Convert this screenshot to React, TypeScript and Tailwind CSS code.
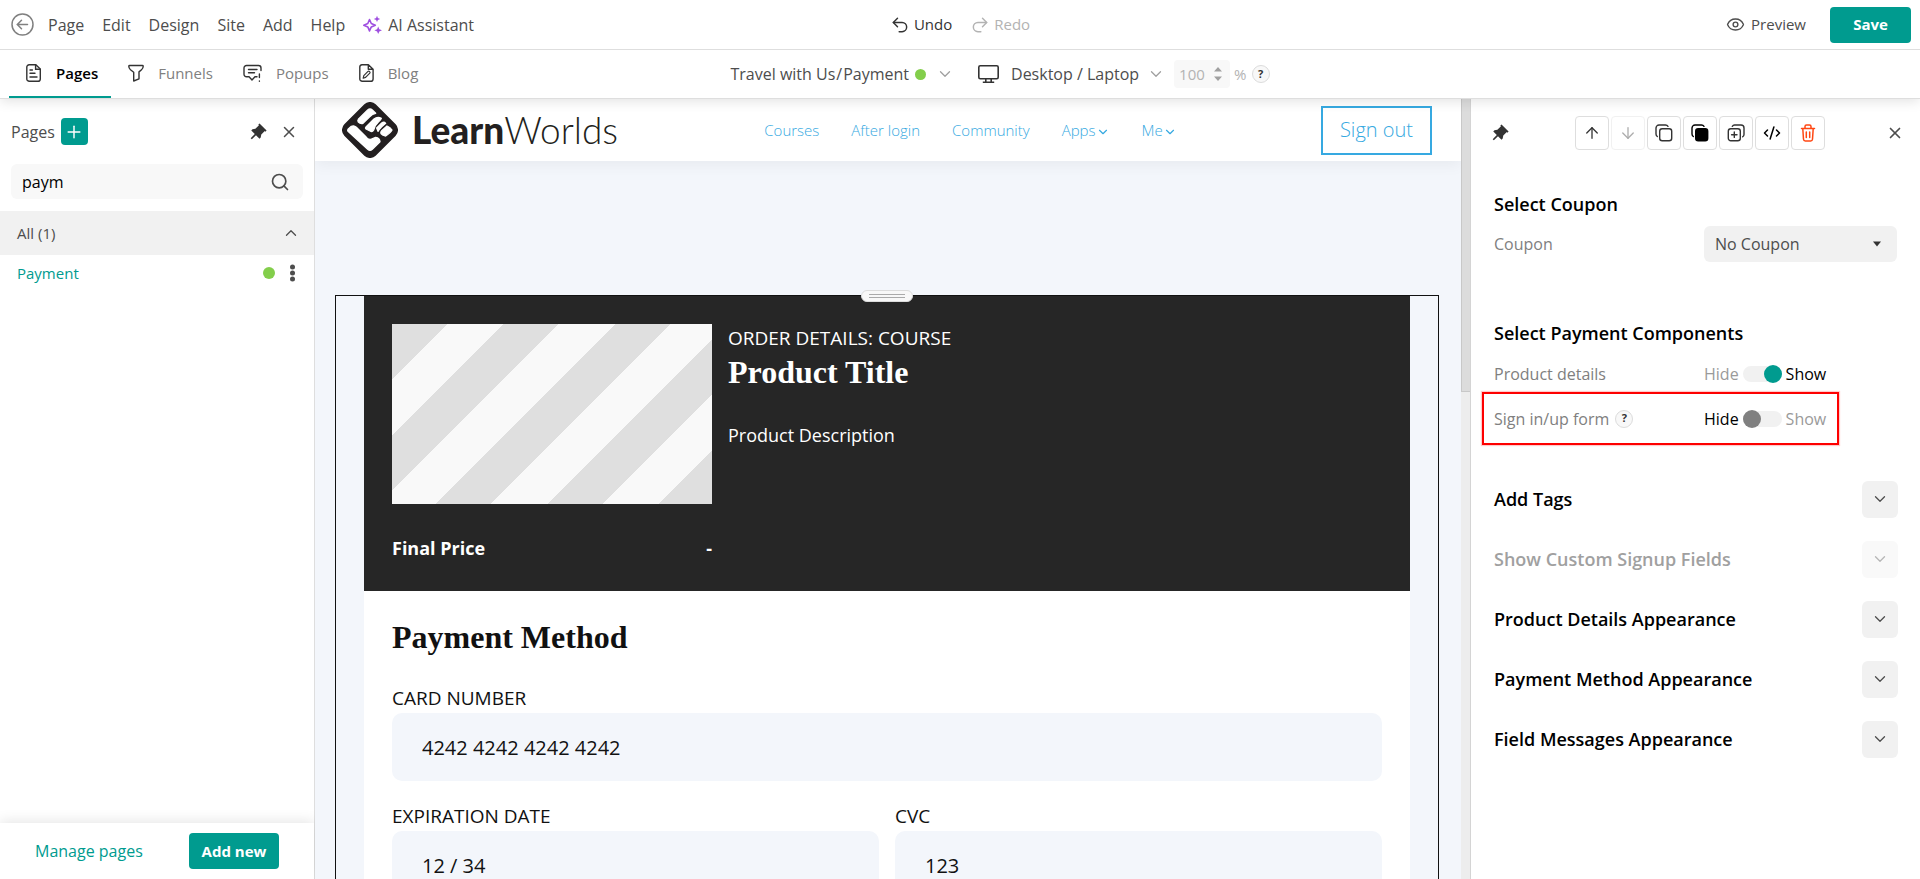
import { useState, type ReactNode } from "react";
import {
  ArrowDown,
  ArrowUp,
  ChevronDown,
  ChevronUp,
  CodeXml,
  Eye,
  Plus,
  Redo2,
  Search,
  Undo2,
  X,
} from "lucide-react";
import { RiPushpinFill } from "react-icons/ri";

const menuItems = ["Page", "Edit", "Design", "Site", "Add", "Help"];

const PagesIcon = () => (
  <svg width="16" height="20" viewBox="0 0 16 20" fill="none" stroke="#333" strokeWidth="1.4">
    <path d="M3.2 1.7h6.6l4.5 4.4v9.8a2.4 2.4 0 0 1-2.4 2.4H3.2A2.4 2.4 0 0 1 .8 15.9V4.1a2.4 2.4 0 0 1 2.4-2.4Z" />
    <path d="M9.6 1.9v4.3h4.5M4 7h2.4M4 10.2h5M4 14h7" strokeLinecap="round" />
  </svg>
);

const FunnelIcon = () => (
  <svg width="16" height="20" viewBox="0 0 16 20" fill="none" stroke="#333" strokeWidth="1.4" strokeLinejoin="round">
    <path d="M.8 3.2c0-.5.3-.7.8-.7h12.8c.5 0 .8.2.8.7 0 1.7-.6 2.6-1.7 3.5L11 8.9v6.900L5.700 18V9.200L2.500 6.700C1.400 5.800.8 4.900.8 3.200Z" />
  </svg>
);

const PopupsIcon = () => (
  <svg width="19" height="20" viewBox="0 0 19 20" fill="none" stroke="#333" strokeWidth="1.4" strokeLinecap="round">
    <path d="M14 13.8h-2l-3 3.2-3-3.200H3.500a2.500 2.500 0 0 1-2.500-2.500V5a2.500 2.500 0 0 1 2.500-2.500h12A2.500 2.500 0 0 1 18 5v2.500M5.500 6.500h8.500M5.500 9.800h6M16.400 11v3.500M16.400 18v.3" />
  </svg>
);

const BlogIcon = () => (
  <svg width="15" height="20" viewBox="0 0 15 20" fill="none" stroke="#333" strokeWidth="1.4" strokeLinejoin="round">
    <path d="M3 1.7h6.4l4.7 4.600v9.600a2.400 2.400 0 0 1-2.400 2.400H3.200A2.400 2.400 0 0 1 .8 15.900V4.100A2.400 2.400 0 0 1 3 1.700ZM9.300 1.900v4.300h4.500" />
    <path d="m4.200 15.200.6-2.600 4.200-4.200c1-.9 2.700.8 1.800 1.800l-4.200 4.200Z" strokeWidth="1.2" />
  </svg>
);

const SparkleIcon = () => (
  <svg width="19" height="20" viewBox="0 0 19 20">
    <path d="M6.5 4.5 8.3 8.5l4 1.7-4 1.7-1.8 4-1.700-4-4-1.700 4-1.700Z" fill="none" stroke="#9f4fe0" strokeWidth="1.6" strokeLinejoin="round" />
    <path d="m14 .8.9 2.200 2.300.9-2.300 1L14 7l-.9-2.100-2.300-1 2.300-.9Z" fill="#9f4fe0" />
    <path d="m15.200 11.500 1.100 2.700 2.700 1.100-2.700 1.100-1.100 2.700-1.100-2.700-2.700-1.100 2.700-1.100Z" fill="#9f4fe0" />
  </svg>
);

const MonitorIcon = () => (
  <svg width="21" height="20" viewBox="0 0 21 20" fill="none" stroke="#333" strokeWidth="1.6">
    <rect x=".8" y="1.8" width="19.4" height="13" rx="1.5" />
    <path d="M7.8 15v3M13.2 15v3M4.8 18.2h11.400" />
  </svg>
);

const CopyIcon = ({ filled = false }: { filled?: boolean }) => (
  <svg width="18" height="18" viewBox="0 0 18 18" fill="none" stroke={filled ? "#000" : "#333"} strokeWidth="1.4" strokeLinecap="round">
    <rect x="4.7" y="4.7" width="12" height="12" rx="2.5" fill={filled ? "#000" : "none"} />
    <path d="M2.3 12.500A3 3 0 0 1 1 10V4a3 3 0 0 1 3-3h6.500c1.200 0 2 .5 2.500 1.300" />
  </svg>
);

const CopyPlusIcon = () => (
  <svg width="18" height="18" viewBox="0 0 18 18" fill="none" stroke="#333" strokeWidth="1.4" strokeLinecap="round">
    <rect x="1.3" y="4.7" width="12" height="12" rx="2.5" />
    <path d="M7.300 8v5.400M4.600 10.700H10M5.300 2.300A3 3 0 0 1 7.500 1H14a3 3 0 0 1 3 3v6.500c0 1-.5 1.700-1.300 2.300" />
  </svg>
);

const TrashIcon = () => (
  <svg width="16" height="18" viewBox="0 0 16 18" fill="none" stroke="#ff4713" strokeWidth="1.5" strokeLinecap="round" strokeLinejoin="round">
    <path d="M1.500 4.500h13M2.800 4.700l.7 10.500c.1 1.100.7 1.700 1.800 1.700h5.400c1.100 0 1.700-.6 1.800-1.700l.7-10.500M5 4.300V2.500C5 1.500 5.500 1 6.500 1h3c1 0 1.500.5 1.500 1.500v1.800M6.300 8v5.500M9.700 8v5.500" />
  </svg>
);

const LogoMark = () => (
  <svg width="56" height="56" viewBox="21 18 168 168">
    <rect x="38.5" y="35.5" width="133" height="133" rx="24" fill="#231f20" transform="rotate(45 105 102)" />
    <g fill="#fff" stroke="#fff" strokeWidth="4" strokeLinejoin="round">
      <path d="M70 70 98 42Q105 36 112 42L122 52Q112 54 104 62L84 82Q76 84 70 78Q67 74 70 70Z" />
      <path d="M93 93 117 69Q128 60 139 67Q138 71 130 78Q119 88 116 102Q112 109 105 105L93 99Q90 96 93 93Z" />
      <path d="M125 96 140 81Q147 76 152 82L140 92Q132 100 129 106Z" />
      <path d="M140 104 156 90Q166 94 171 102Q167 110 152 120Q141 118 138 113Q136 108 140 104Z" />
      <path d="M39 100 49 91Q57 87 64 94L94 124Q103 134 113 128L122 124Q134 126 135 137L112 160Q105 166 98 160L39 106Q37 103 39 100Z" />
    </g>
  </svg>
);

const HelpBadge = () => (
  <button
    aria-label="Help"
    className="flex h-[18px] w-[18px] items-center justify-center rounded-full border border-[#dcdcdc] bg-[#f8f8f8] text-[11px] font-bold text-[#333]"
  >
    ?
  </button>
);

const tabs = [
  { name: "Pages", icon: <PagesIcon /> },
  { name: "Funnels", icon: <FunnelIcon /> },
  { name: "Popups", icon: <PopupsIcon /> },
  { name: "Blog", icon: <BlogIcon /> },
];

const TopBar = () => (
  <div className="grid h-[50px] grid-cols-[1fr_auto_1fr] items-center border-b border-[#dedede]">
    <nav className="flex items-center gap-[18px] pl-[11px] text-base text-[#4d4d4d]">
      <button aria-label="Back" className="-mr-1 text-[#808080]">
        <svg width="23" height="23" viewBox="0 0 23 23" fill="none" stroke="currentColor" strokeWidth="1.5" strokeLinecap="round">
          <circle cx="11.5" cy="11.5" r="10.5" />
          <path d="M16.500 11.500h-10M10.500 7.300l-4.200 4.200 4.200 4.200" />
        </svg>
      </button>
      {menuItems.map((item) => (
        <button key={item}>{item}</button>
      ))}
      <button className="flex items-center gap-[6px]">
        <SparkleIcon />
        AI Assistant
      </button>
    </nav>
    <div className="flex items-center gap-[18px] text-[15px]">
      <button className="flex items-center gap-1 font-medium text-[#333]">
        <Undo2 size={20} strokeWidth={1.75} />
        Undo
      </button>
      <button disabled className="flex items-center gap-1 font-medium text-[#b3b3b3]">
        <Redo2 size={20} strokeWidth={1.75} />
        Redo
      </button>
    </div>
    <div className="flex items-center justify-end gap-6 pr-[9px] text-[15px]">
      <button className="flex items-center gap-[6px] font-medium text-[#4d4d4d]">
        <Eye size={19} strokeWidth={1.75} />
        Preview
      </button>
      <button className="h-9 w-[81px] rounded bg-[#009b8f] font-bold text-white">Save</button>
    </div>
  </div>
);

const ToolBar = () => (
  <div className="grid h-[49px] grid-cols-[1fr_auto_1fr] items-center border-b border-[#dedede]">
    <div className="flex h-full pl-[9px] text-[15px] font-medium text-[#808080]">
      {tabs.map((tab, ind) => (
        <button
          key={tab.name}
          className={
            ind == 0
              ? "flex h-full items-center gap-[14px] border-b-2 border-[#009b8f] pr-[13px] pl-[17px] font-semibold text-black"
              : "flex h-full items-center gap-[14px] border-b-2 border-transparent pr-[13px] pl-[17px]"
          }
        >
          {tab.icon}
          {tab.name}
        </button>
      ))}
    </div>
    <div className="flex items-center pl-20 text-base text-[#4d4d4d]">
      <button className="flex items-center gap-[6px]">
        <span className="flex gap-px">
          <span>Travel with Us</span>
          <span>/</span>
          <span>Payment</span>
        </span>
        <span className="h-[11px] w-[11px] rounded-full bg-[#83ce4b]" />
        <ChevronDown size={18} strokeWidth={1.75} className="ml-1 text-[#a0a0a0]" />
      </button>
      <button className="ml-6 flex items-center">
        <MonitorIcon />
        <span className="mr-2 ml-3">Desktop / Laptop</span>
        <ChevronDown size={18} strokeWidth={1.75} className="text-[#a0a0a0]" />
      </button>
      <label className="ml-[9px] flex items-center gap-1 text-[15px] text-[#b3b3b3]">
        <span className="flex h-[28px] w-[56px] items-center justify-between rounded bg-[#f8f8f8] pr-2 pl-[5px]">
          <input aria-label="Zoom" disabled defaultValue="100" className="w-[30px]" />
          <svg width="8" height="14" viewBox="0 0 8 14" fill="#a0a0a0">
            <path d="M4 0l4 4.500H0ZM4 14l4-4.500H0Z" />
          </svg>
        </span>
        %
      </label>
      <span className="ml-[5px] flex">
        <HelpBadge />
      </span>
    </div>
    <div />
  </div>
);

const PagesPanel = () => (
  <aside className="flex w-[315px] shrink-0 flex-col border-r border-[#dedede] bg-white text-[15px] text-[#4d4d4d]">
    <div className="flex items-center pt-[19px] pr-4 pl-[11px]">
      <h2 className="text-base font-medium">Pages</h2>
      <button aria-label="Add page" className="ml-[6px] flex h-[27px] w-[27px] items-center justify-center rounded bg-[#009b8f] text-white">
        <Plus size={20} strokeWidth={1.75} />
      </button>
      <button aria-label="Pin" className="ml-auto text-[#333]">
        <RiPushpinFill size={20} />
      </button>
      <button aria-label="Close" className="ml-3">
        <X size={18} strokeWidth={2} />
      </button>
    </div>
    <div className="mx-[11px] mt-[19px] flex h-[35px] items-center rounded-md bg-[#f8f8f8] pr-[13px] pl-[11px]">
      <input aria-label="Search pages" defaultValue="paym" className="min-w-0 flex-1 bg-transparent text-base text-black outline-none" />
      <Search size={20} strokeWidth={2} className="text-[#4d4d4d]" />
    </div>
    <button className="mt-3 flex h-11 items-center justify-between bg-[#f1f1f1] pr-[14px] pl-[17px]">
      All (1)
      <ChevronUp size={18} strokeWidth={1.75} />
    </button>
    <div className="flex h-9 items-center pr-[18px] pl-[17px]">
      <a href="#" className="text-[#009b8f]">Payment</a>
      <span className="ml-auto h-3 w-3 rounded-full bg-[#83ce4b]" />
      <button aria-label="More" className="ml-[14px]">
        <svg width="7" height="18" viewBox="0 0 7 18" fill="#4d4d4d">
          <circle cx="3.5" cy="3" r="2.5" />
          <circle cx="3.5" cy="9" r="2.5" />
          <circle cx="3.5" cy="15" r="2.5" />
        </svg>
      </button>
    </div>
    <div className="mt-auto flex h-14 items-center justify-between pr-[35px] pl-[35px] shadow-[0_-2px_12px_rgba(0,0,0,0.1)]">
      <a href="#" className="text-base text-[#009b8f]">Manage pages</a>
      <button className="h-9 w-[90px] rounded bg-[#009b8f] text-[15px] font-bold text-white">Add new</button>
    </div>
  </aside>
);

const SiteHeader = () => (
  <header className="flex h-[62px] items-center bg-white pr-[29px] pl-[27px] text-[#36a9e1] shadow-[0_4px_14px_rgba(0,0,0,0.05)]">
    <LogoMark />
    <div className="ml-[14px] w-[208px] font-[Lato] text-[37px] leading-10 font-light whitespace-nowrap text-[#231f20]">
      <span className="font-black">Learn</span>Worlds
    </div>
    <nav className="mx-auto flex items-center gap-8 text-[15px] font-light">
      <a href="#">Courses</a>
      <a href="#">After login</a>
      <a href="#">Community</a>
      <a href="#" className="flex items-center">
        Apps
        <ChevronDown size={14} strokeWidth={2} className="mt-1" />
      </a>
      <a href="#" className="flex items-center">
        Me
        <ChevronDown size={14} strokeWidth={2} className="mt-1" />
      </a>
    </nav>
    <button className="h-[49px] w-[111px] border-2 border-[#36a9e1] text-xl font-light">Sign out</button>
  </header>
);

const Field = ({ id, label, value }: { id: string; label: string; value: string }) => (
  <div>
    <label htmlFor={id} className="block text-[19px] leading-[30px] uppercase">
      {label}
    </label>
    <input id={id} defaultValue={value} className="block h-[68px] w-full rounded-[10px] bg-[#f3f6fb] px-[30px] text-xl outline-none" />
  </div>
);

const Canvas = () => (
  <main className="min-w-0 flex-1 overflow-hidden bg-[#f3f6fb]">
    <SiteHeader />
    <section className="relative mt-[134px] mr-[22px] ml-5 border border-[#111] px-7">
      <div className="absolute -top-[6px] left-1/2 flex h-3 w-[52px] -translate-x-1/2 flex-col items-center justify-center gap-[2px] rounded-md border border-[#dcdcdc] bg-[#f8f8f8]">
        <span className="h-px w-9 bg-[#aaa]" />
        <span className="h-px w-9 bg-[#aaa]" />
      </div>
      <div className="flex h-[295px] gap-4 bg-[#262626] p-7 text-white">
        <div className="w-80 shrink-0">
          <div className="h-[180px] bg-[repeating-linear-gradient(135deg,#dfdfdf_0_39px,#f9f9f9_39px_79px)]" />
          <div className="mt-[30px] flex justify-between text-lg font-bold">
            <span>Final Price</span>
            <span>-</span>
          </div>
        </div>
        <div>
          <div className="text-[19px] leading-7 uppercase">Order details: course</div>
          <h2 className="font-['Liberation_Serif'] text-[32px] leading-10 font-bold">Product Title</h2>
          <p className="mt-[29px] text-lg leading-7">Product Description</p>
        </div>
      </div>
      <div className="bg-white px-7 pt-7 text-[#111]">
        <h2 className="font-['Liberation_Serif'] text-[32px] leading-9 font-bold">Payment Method</h2>
        <div className="mt-7">
          <Field id="card" label="Card number" value="4242 4242 4242 4242" />
        </div>
        <div className="mt-5 grid grid-cols-2 gap-4 pb-7">
          <Field id="exp" label="Expiration date" value="12 / 34" />
          <Field id="cvc" label="CVC" value="123" />
        </div>
      </div>
    </section>
  </main>
);

const ToolButton = ({ label, children, disabled = false }: { label: string; children: ReactNode; disabled?: boolean }) => (
  <button
    aria-label={label}
    disabled={disabled}
    className="flex h-[34px] w-[34px] items-center justify-center rounded border border-[#dedede] text-[#333] disabled:opacity-40"
  >
    {children}
  </button>
);

const ToggleRow = ({ label, initial, help = false }: { label: string; initial: boolean; help?: boolean }) => {
  const [show, setShow] = useState(initial);
  return (
    <div className="grid h-[45px] grid-cols-[210px_auto] items-center justify-start">
      <div className="flex items-center gap-[6px] text-[#808080]">
        {label}
        {help && <HelpBadge />}
      </div>
      <label className="flex items-center gap-1">
        <span className={show ? "text-[#9a9a9a]" : "text-black"}>Hide</span>
        <input
          type="checkbox"
          role="switch"
          aria-label={label}
          checked={show}
          onChange={(e) => setShow(e.target.checked)}
          className="flex h-4 w-[39px] appearance-none items-center rounded-full bg-[#f1f1f1] before:h-[18px] before:w-[18px] before:shrink-0 before:rounded-full before:bg-[#808080] checked:justify-end checked:before:bg-[#009b8f]"
        />
        <span className={show ? "text-black" : "text-[#9a9a9a]"}>Show</span>
      </label>
    </div>
  );
};

const sections = [
  { title: "Add Tags", disabled: false },
  { title: "Show Custom Signup Fields", disabled: true },
  { title: "Product Details Appearance", disabled: false },
  { title: "Payment Method Appearance", disabled: false },
  { title: "Field Messages Appearance", disabled: false },
];

const SettingsPanel = () => (
  <aside className="w-[450px] shrink-0 border-l border-[#d4d4d4] bg-white pt-[17px] pr-[22px] pl-[23px] text-base">
    <div className="flex items-center justify-between">
      <button aria-label="Pin" className="-ml-1 text-[#333]">
        <RiPushpinFill size={20} />
      </button>
      <div className="flex gap-[2px] pl-1">
        <ToolButton label="Move up"><ArrowUp size={18} strokeWidth={1.75} /></ToolButton>
        <ToolButton label="Move down" disabled><ArrowDown size={18} strokeWidth={1.75} /></ToolButton>
        <ToolButton label="Copy"><CopyIcon /></ToolButton>
        <ToolButton label="Copy style"><CopyIcon filled /></ToolButton>
        <ToolButton label="Duplicate"><CopyPlusIcon /></ToolButton>
        <ToolButton label="Code"><CodeXml size={18} className="text-black" /></ToolButton>
        <ToolButton label="Delete"><TrashIcon /></ToolButton>
      </div>
      <button aria-label="Close" className="-mr-2 pr-[2px] text-[#4d4d4d]">
        <X size={18} strokeWidth={2.25} />
      </button>
    </div>

    <h3 className="mt-[42px] text-lg leading-6 font-semibold">Select Coupon</h3>
    <div className="mt-[10px] grid h-9 grid-cols-[210px_193px] items-center">
      <label htmlFor="coupon" className="text-[#808080]">Coupon</label>
      <div className="grid items-center">
        <select id="coupon" className="col-start-1 row-start-1 h-9 w-full appearance-none rounded-md bg-[#f1f1f1] px-[11px] text-[#4d4d4d]">
          <option>No Coupon</option>
        </select>
        <svg width="8" height="6" viewBox="0 0 8 6" fill="#333" className="pointer-events-none col-start-1 row-start-1 mr-4 justify-self-end">
          <path d="M0 .5h8L4 5.500Z" />
        </svg>
      </div>
    </div>

    <h3 className="mt-[59px] mb-[6px] text-lg leading-6 font-semibold">Select Payment Components</h3>
    <ToggleRow label="Product details" initial={true} />
    <div className="-mt-1 -ml-3 w-[357px] border-2 border-[#fe0000] py-[2px] pl-[10px] shadow-[0_0_1px_1px_rgba(255,0,0,0.2)]">
      <ToggleRow label="Sign in/up form" initial={false} help />
    </div>

    <div className="mt-6">
      {sections.map((section) => (
        <div key={section.title} className="flex h-[60px] items-center justify-between">
          <h3 className={section.disabled ? "text-lg font-semibold text-[#a0a0a0]" : "text-lg font-semibold"}>
            {section.title}
          </h3>
          <button
            aria-label={section.title}
            disabled={section.disabled}
            className="flex h-[37px] w-9 items-center justify-center rounded-md bg-[#f1f1f1] text-[#4d4d4d] disabled:opacity-40"
          >
            <ChevronDown size={18} strokeWidth={1.75} />
          </button>
        </div>
      ))}
    </div>
  </aside>
);

const App = () => {
  return (
    <div className="flex h-screen flex-col overflow-hidden bg-white font-['Open_Sans',sans-serif] text-black">
      <div className="relative shadow-[0_2px_12px_rgba(0,0,0,0.12)]">
        <TopBar />
        <ToolBar />
      </div>
      <div className="flex min-h-0 flex-1">
        <PagesPanel />
        <Canvas />
        <div className="w-[9px] shrink-0 bg-[#ededed]">
          <div className="h-[293px] border-b border-l border-[#c8c8c8] bg-[#dcdcdc]" />
        </div>
        <SettingsPanel />
      </div>
    </div>
  );
};

export default App;
